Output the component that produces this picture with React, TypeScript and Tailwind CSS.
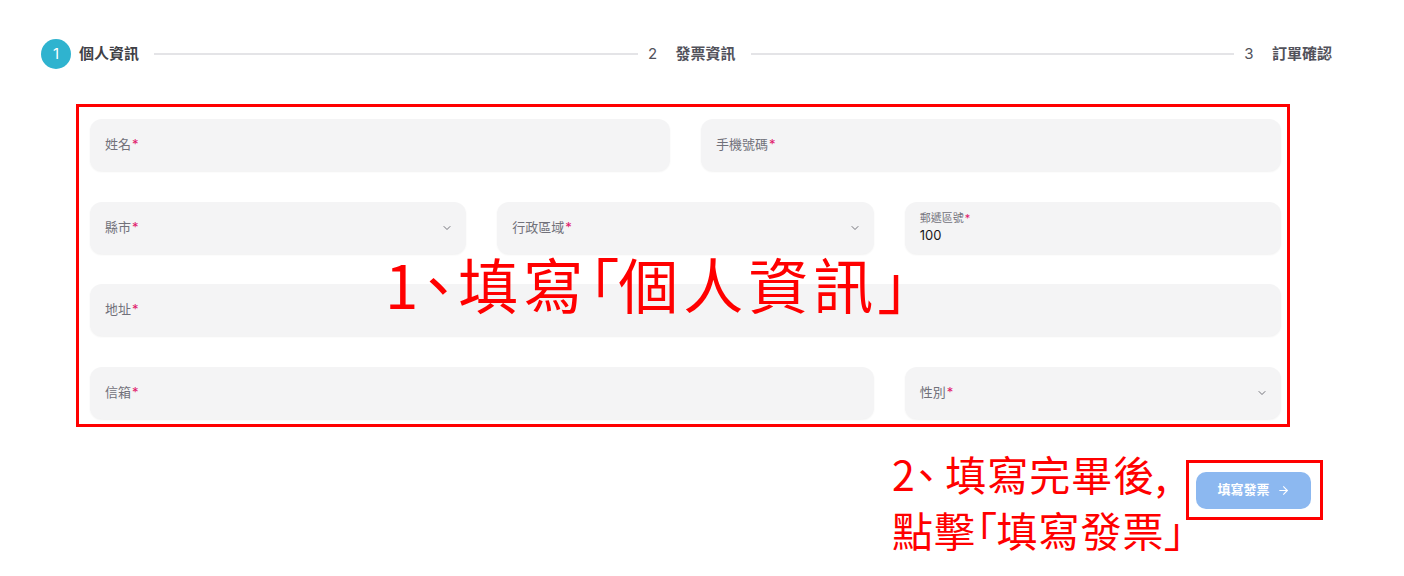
import React from "react";
import { ChevronDown, ArrowRight } from "lucide-react";

const UI = { fontFamily: "Inter, 'Noto Sans CJK TC', 'Noto Sans', sans-serif" };
const CJK = { fontFamily: "'Noto Sans CJK TC', 'Noto Sans', sans-serif" };
const PALT = { fontFeatureSettings: "'palt'" };
const PALT0 = { fontFeatureSettings: "'palt'", letterSpacing: 0 };

function Label({ text }: { text: string }) {
  return (
    <span className="text-[13px] text-[#71717a]">
      {text}
      <span className="text-[#e0186c] ml-[1px]">*</span>
    </span>
  );
}

function Field({ label, select, className = "" }: { label: string; select?: boolean; className?: string }) {
  return (
    <div
      className={`h-[52px] rounded-[12px] bg-[#f4f4f5] shadow-[0_1px_2px_rgba(0,0,0,0.06)] flex items-center justify-between pl-[15px] pr-[13px] ${className}`}
    >
      <Label text={label} />
      {select && <ChevronDown size={12} strokeWidth={1.6} className="text-[#52525b]" />}
    </div>
  );
}

function Step({ n, label, active }: { n: number; label: string; active?: boolean }) {
  return (
    <div className="flex items-center gap-[8px] shrink-0">
      <div
        className={`w-[30px] h-[30px] rounded-full flex items-center justify-center text-[15px] ${
          active ? "bg-[#2fb3cf] text-white" : "text-[#52525b]"
        }`}
      >
        {n}
      </div>
      <span className={`text-[15px] font-bold ${active ? "text-[#3f3f46]" : "text-[#52525b]"}`}>{label}</span>
    </div>
  );
}

export default function App() {
  return (
    <div className="relative w-[1404px] h-[576px] bg-white overflow-hidden" style={UI}>
      {/* Stepper */}
      <div className="flex items-center pt-[39px] pl-[41px] w-[1332px]">
        <Step n={1} label="個人資訊" active />
        <div className="flex-1 h-[2px] bg-[#e4e4e7] ml-[15px]" />
        <Step n={2} label="發票資訊" />
        <div className="flex-1 h-[2px] bg-[#e4e4e7] ml-[15px]" />
        <Step n={3} label="訂單確認" />
      </div>

      {/* Form */}
      <div className="ml-[90px] mt-[50px] w-[1191px] grid grid-cols-6 gap-x-[31px] gap-y-[30.5px]">
        <Field label="姓名" className="col-span-3" />
        <Field label="手機號碼" className="col-span-3" />
        <Field label="縣市" select className="col-span-2" />
        <Field label="行政區域" select className="col-span-2" />
        <div className="col-span-2 h-[52px] rounded-[12px] bg-[#f4f4f5] shadow-[0_1px_2px_rgba(0,0,0,0.06)] flex flex-col justify-center pl-[15px]">
          <span className="text-[11px] text-[#71717a] leading-[14px]">
            郵遞區號<span className="text-[#e0186c] ml-[1px]">*</span>
          </span>
          <span className="text-[13px] text-[#18181b] leading-[18px] mt-[1px]">100</span>
        </div>
        <Field label="地址" className="col-span-6" />
        <Field label="信箱" className="col-span-4" />
        <Field label="性別" select className="col-span-2" />
      </div>

      {/* Button */}
      <div className="flex justify-end w-[1311px] mt-[53px]">
        <button className="w-[115px] h-[37px] rounded-[10px] bg-[#8cb8f0] text-white text-[13px] font-bold flex items-center justify-center gap-[7px]">
          填寫發票
          <ArrowRight size={13} strokeWidth={2} />
        </button>
      </div>

      {/* Annotations */}
      <div className="absolute left-[76px] top-[104px] w-[1214px] h-[323px] border-[3px] border-[#ff0000] pointer-events-none" />
      <div className="absolute left-[1186px] top-[460px] w-[137px] h-[60px] border-[3px] border-[#ff0000] pointer-events-none" />
      <div
        className="absolute left-[385px] top-[243px] text-[60px] leading-[80px] tracking-[5px] text-[#ff0000] whitespace-nowrap"
        style={CJK}
      >
        1<span style={PALT}>、</span>填寫<span style={PALT0}>「</span>個人資訊<span style={PALT}>」</span>
      </div>
      <div
        className="absolute left-[892px] top-[445px] text-[41px] leading-[56px] tracking-[1px] text-[#ff0000] whitespace-nowrap"
        style={CJK}
      >
        <div>
          2<span className="mr-[8px]" style={PALT}>、</span>填寫完畢後,
        </div>
        <div>
          點擊<span style={PALT0}>「</span>填寫發票<span style={PALT}>」</span>
        </div>
      </div>
    </div>
  );
}
